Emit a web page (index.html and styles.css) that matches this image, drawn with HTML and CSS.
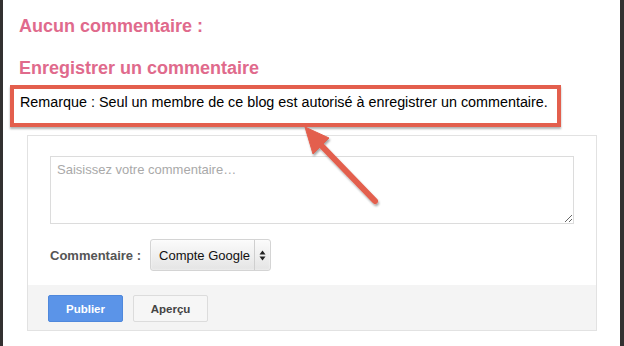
FILE: index.html
```html
<!DOCTYPE html>
<html lang="fr">
<head>
  <meta charset="UTF-8">
  <title>Commentaires</title>
  <link rel="stylesheet" href="styles.css">
</head>
<body>
  <div class="page">
    <h4 class="heading">Aucun commentaire :</h4>
    <h4 class="heading heading-post">Enregistrer un commentaire</h4>

    <div class="notice">
      Remarque : Seul un membre de ce blog est autorisé à enregistrer un commentaire.
    </div>

    <div class="comment-form">
      <div class="form-body">
        <textarea class="comment-input" placeholder="Saisissez votre commentaire…"></textarea>
        <div class="identity-row">
          <span class="identity-label">Commentaire :</span>
          <div class="identity-select">
            <span class="select-value">Compte Google</span>
            <span class="select-arrows">
              <svg width="7" height="11" viewBox="0 0 7 11">
                <path d="M3.5 0.5 L6.5 4.5 L0.5 4.5 Z" fill="#222"/>
                <path d="M3.5 10.5 L6.5 6.5 L0.5 6.5 Z" fill="#222"/>
              </svg>
            </span>
          </div>
        </div>
      </div>
      <div class="form-footer">
        <button class="btn btn-primary">Publier</button>
        <button class="btn">Aperçu</button>
      </div>
    </div>

    <!-- annotation arrow -->
    <svg class="callout-arrow" width="624" height="346" viewBox="0 0 624 346">
      <defs>
        <filter id="arrowShadow" x="-20%" y="-20%" width="140%" height="140%">
          <feDropShadow dx="1" dy="2" stdDeviation="1.2" flood-color="#000" flood-opacity="0.35"/>
        </filter>
      </defs>
      <g filter="url(#arrowShadow)" fill="#e35f4d" stroke="#e35f4d">
        <line x1="375" y1="201" x2="317" y2="141" stroke-width="6" stroke-linecap="round"/>
        <polygon points="305,127 313,154 329,138" stroke-width="1" stroke-linejoin="round"/>
      </g>
    </svg>
  </div>
</body>
</html>
```

FILE: styles.css
```css
* {
  margin: 0;
  padding: 0;
  box-sizing: border-box;
}

body {
  font-family: "Liberation Sans", Arial, Helvetica, sans-serif;
  background: #ffffff;
  width: 624px;
  height: 346px;
  overflow: hidden;
}

.page {
  position: relative;
  height: 346px;
  border-left: 3px solid #333131;
  border-right: 4px solid #333131;
  padding-top: 15px;
}

.heading {
  color: #e06a8c;
  font-size: 18px;
  font-weight: 700;
  line-height: 22px;
  margin-left: 16px;
}

.heading-post {
  margin-top: 20px;
}

.notice {
  margin: 6px 0 0 7px;
  width: 551px;
  height: 42px;
  border: 4px solid #e35f4d;
  padding: 5px 0 0 6px;
  font-size: 14.35px;
  line-height: 17px;
  color: #000;
  white-space: nowrap;
  box-shadow: 0 2px 2px rgba(0, 0, 0, 0.3);
}

.comment-form {
  margin: 8px 0 0 24px;
  width: 570px;
  border: 1px solid #e2e2e2;
}

.form-body {
  padding: 20px 0 14px 22px;
}

.comment-input {
  display: block;
  width: 524px;
  height: 68px;
  border: 1px solid #dcdcdc;
  padding: 5px 6px;
  font-family: "Liberation Sans", Arial, sans-serif;
  font-size: 13px;
  line-height: 16px;
  color: #333;
  resize: both;
  outline: none;
}

.comment-input::placeholder {
  color: #a9a9a9;
}

.identity-row {
  display: flex;
  align-items: center;
  gap: 9px;
  margin-top: 15px;
}

.identity-label {
  font-size: 13px;
  font-weight: 700;
  color: #555;
  white-space: nowrap;
}

.identity-select {
  display: flex;
  align-items: stretch;
  width: 121px;
  height: 32px;
  border: 1px solid #d4d4d4;
  border-radius: 3px;
  background: linear-gradient(#fbfbfb, #e4e4e4);
  box-shadow: inset 0 0 2px rgba(255, 255, 255, 0.9);
}

.select-value {
  display: flex;
  align-items: center;
  flex: 1;
  padding-left: 8px;
  font-size: 13px;
  color: #111;
  white-space: nowrap;
}

.select-arrows {
  display: flex;
  align-items: center;
  justify-content: center;
  width: 16px;
  border-left: 1px solid #cfcfcf;
}

.form-footer {
  display: flex;
  gap: 10px;
  background: #f4f4f4;
  padding: 10px 0 8px 20px;
}

.btn {
  width: 75px;
  height: 27px;
  border: 1px solid #dcdcdc;
  border-radius: 2px;
  background: #f6f6f6;
  font-family: "Liberation Sans", Arial, sans-serif;
  font-size: 11.5px;
  font-weight: 700;
  color: #444;
}

.btn-primary {
  background: #5b94e8;
  border-color: #4f88dc;
  color: #fff;
}

.callout-arrow {
  position: absolute;
  top: 0;
  left: -3px;
  pointer-events: none;
}
```
